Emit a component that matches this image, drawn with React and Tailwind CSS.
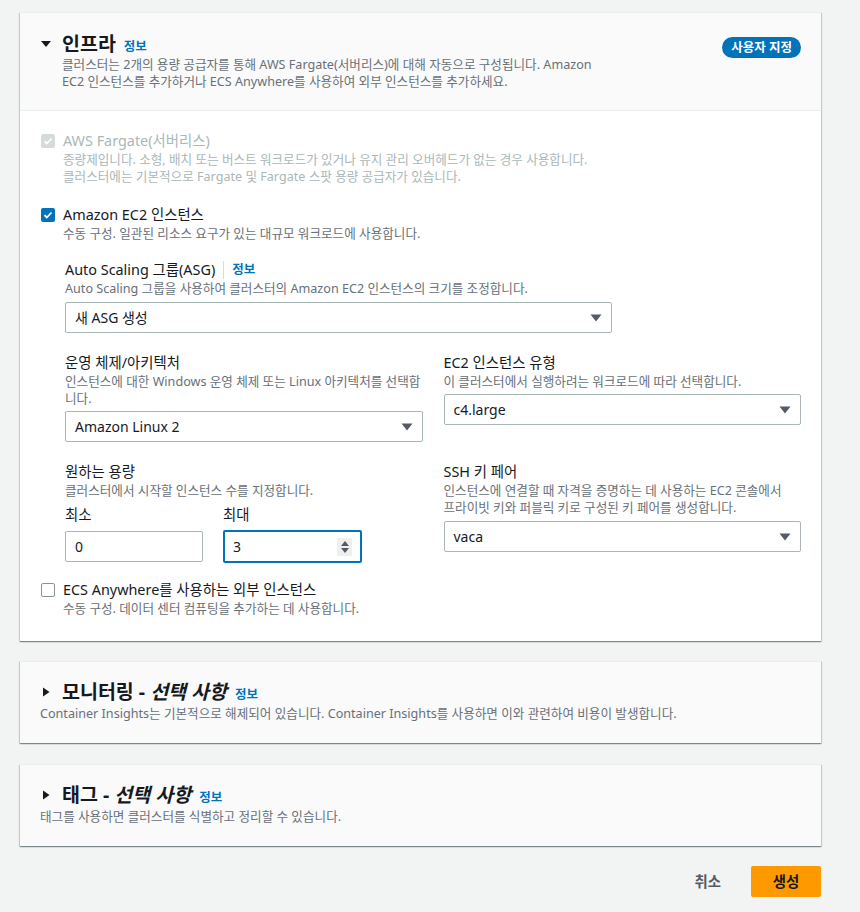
const FONT = { fontFamily: '"Noto Sans", "Noto Sans CJK KR", sans-serif' };

const Caret = ({ open }) => (
  <svg width="12" height="12" viewBox="0 0 12 12" className="shrink-0">
    {open ? <path d="M1 3h10L6 9z" fill="#16191f" /> : <path d="M3 1.5v9L9.5 6z" fill="#16191f" />}
  </svg>
);

const Info = ({ className = "" }) => (
  <span className={"text-[12.5px] font-bold text-[#0073bb] " + className}>정보</span>
);

const Line = ({ children, muted }) => (
  <div className={"h-[17px] whitespace-nowrap text-[12.6px] leading-[17px] " + (muted ? "text-[#aab7b8]" : "text-[#687078]")}>
    {children}
  </div>
);

const Checkbox = ({ state }) => {
  if (state === "off")
    return <span className="mt-[3px] block h-[14px] w-[14px] shrink-0 rounded-[2px] border border-[#879596] bg-white" />;
  const bg = state === "disabled" ? "bg-[#d5dbdb]" : "bg-[#0073bb]";
  return (
    <span className={"mt-[3px] flex h-[14px] w-[14px] shrink-0 items-center justify-center rounded-[2px] " + bg}>
      <svg width="10" height="10" viewBox="0 0 10 10">
        <path d="M1.5 5.2l2.3 2.3 4.7-5" stroke="white" strokeWidth="1.8" fill="none" />
      </svg>
    </span>
  );
};

const Select = ({ value, className = "" }) => (
  <div className={"flex h-[31px] items-center justify-between rounded-[2px] border border-[#aab7b8] bg-white pl-[9px] pr-[9px] " + className}>
    <span className="text-[14px] text-[#16191f]">{value}</span>
    <svg width="12" height="8" viewBox="0 0 12 8">
      <path d="M0.5 0.5h11L6 7.5z" fill="#545b64" />
    </svg>
  </div>
);

const Label = ({ children, muted }) => (
  <div className={"flex h-5 items-center whitespace-nowrap text-[14.4px] leading-5 " + (muted ? "text-[#aab7b8]" : "text-[#16191f]")}>
    {children}
  </div>
);

const Option = ({ state, label, lines, muted }) => (
  <div className="flex gap-2 pl-px">
    <Checkbox state={state} />
    <div>
      <Label muted={muted}>{label}</Label>
      {lines.map((l) => (
        <Line key={l} muted={muted}>{l}</Line>
      ))}
    </div>
  </div>
);

const Field = ({ label, desc, children }) => (
  <div>
    <Label>{label}</Label>
    {desc.map((d) => (
      <Line key={d}>{d}</Line>
    ))}
    {children}
  </div>
);

const cardShadow = "shadow-[0_1px_1px_0_rgba(0,28,36,0.3),1px_1px_1px_0_rgba(0,28,36,0.15),-1px_1px_1px_0_rgba(0,28,36,0.15)]";

const Title = ({ children }) => (
  <h2 className="flex h-[22px] items-baseline gap-2 whitespace-nowrap text-[19.5px] font-bold leading-[22px] text-[#16191f]">
    {children}
  </h2>
);

const CollapsedCard = ({ title, desc }) => (
  <section className={"border-t border-[#eaeded] bg-[#fafafa] px-5 pb-[21px] pt-[19px] " + cardShadow}>
    <div className="flex items-center gap-[10px]">
      <Caret />
      <Title>
        <span>
          {title} - <i>선택 사항</i>
        </span>
        <Info />
      </Title>
    </div>
    <div className="mt-[2px]">
      <Line>{desc}</Line>
    </div>
  </section>
);

export default function App() {
  return (
    <div style={FONT} className="h-[912px] w-[860px] overflow-hidden bg-[#f2f3f3] pt-3">
      <div className="ml-5 w-[801px]">
        {/* 인프라 */}
        <section className={"border-t border-[#eaeded] bg-white " + cardShadow}>
          <header className="flex items-start justify-between border-b border-[#eaeded] bg-[#fafafa] px-5 pb-5 pt-5">
            <div>
              <div className="flex items-center gap-[10px]">
                <Caret open />
                <Title>
                  <span>인프라</span>
                  <Info />
                </Title>
              </div>
              <div className="ml-[22px] mt-px">
                <Line>클러스터는 2개의 용량 공급자를 통해 AWS Fargate(서버리스)에 대해 자동으로 구성됩니다. Amazon</Line>
                <Line>EC2 인스턴스를 추가하거나 ECS Anywhere를 사용하여 외부 인스턴스를 추가하세요.</Line>
              </div>
            </div>
            <span className="mt-1 rounded-full bg-[#0073bb] px-[9px] text-[12.5px] font-bold leading-[21px] text-white">
              사용자 지정
            </span>
          </header>

          <div className="px-5 pb-6 pt-5">
            <Option
              state="disabled"
              muted
              label="AWS Fargate(서버리스)"
              lines={[
                "종량제입니다. 소형, 배치 또는 버스트 워크로드가 있거나 유지 관리 오버헤드가 없는 경우 사용합니다.",
                "클러스터에는 기본적으로 Fargate 및 Fargate 스팟 용량 공급자가 있습니다.",
              ]}
            />
            <div className="mt-5">
              <Option state="on" label="Amazon EC2 인스턴스" lines={["수동 구성. 일관된 리소스 요구가 있는 대규모 워크로드에 사용합니다."]} />
            </div>

            <div className="ml-[25px] mt-[18px]">
              <Label>
                Auto Scaling 그룹(ASG)
                <span className="mx-2 h-[18px] w-px bg-[#d5dbdb]" />
                <Info />
              </Label>
              <Line>Auto Scaling 그룹을 사용하여 클러스터의 Amazon EC2 인스턴스의 크기를 조정합니다.</Line>
              <Select value="새 ASG 생성" className="mt-[5px] w-[547px]" />

              <div className="mt-5 grid grid-cols-2 gap-x-[21px] gap-y-5">
                <Field
                  label="운영 체제/아키텍처"
                  desc={["인스턴스에 대한 Windows 운영 체제 또는 Linux 아키텍처를 선택합", "니다."]}
                >
                  <Select value="Amazon Linux 2" className="mt-1" />
                </Field>
                <Field label="EC2 인스턴스 유형" desc={["이 클러스터에서 실행하려는 워크로드에 따라 선택합니다."]}>
                  <Select value="c4.large" className="mt-1" />
                </Field>

                <Field label="원하는 용량" desc={["클러스터에서 시작할 인스턴스 수를 지정합니다."]}>
                  <div className="mt-1.5 flex gap-5">
                    <div>
                      <Label>최소</Label>
                      <div className="mt-1.5 flex h-[31px] w-[138px] items-center rounded-[2px] border border-[#aab7b8] bg-white px-[9px] text-[14px] text-[#16191f]">
                        0
                      </div>
                    </div>
                    <div>
                      <Label>최대</Label>
                      <div className="mt-[5px] flex h-[33px] w-[139px] items-center justify-between rounded-[2px] border-2 border-[#0073bb] bg-white pl-[8px] pr-[8px] text-[14px] text-[#16191f]">
                        3
                        <span className="flex h-[18px] w-[15px] flex-col items-center justify-center gap-[2px] bg-[#efefef]">
                          <svg width="8" height="5" viewBox="0 0 8 5"><path d="M4 0L8 5H0z" fill="#545b64" /></svg>
                          <svg width="8" height="5" viewBox="0 0 8 5"><path d="M0 0h8L4 5z" fill="#545b64" /></svg>
                        </span>
                      </div>
                    </div>
                  </div>
                </Field>
                <Field
                  label="SSH 키 페어"
                  desc={[
                    "인스턴스에 연결할 때 자격을 증명하는 데 사용하는 EC2 콘솔에서",
                    "프라이빗 키와 퍼블릭 키로 구성된 키 페어를 생성합니다.",
                  ]}
                >
                  <Select value="vaca" className="mt-[5px]" />
                </Field>
              </div>
            </div>

            <div className="mt-[17px]">
              <Option state="off" label="ECS Anywhere를 사용하는 외부 인스턴스" lines={["수동 구성. 데이터 센터 컴퓨팅을 추가하는 데 사용합니다."]} />
            </div>
          </div>
        </section>

        <div className="mt-5">
          <CollapsedCard
            title="모니터링"
            desc="Container Insights는 기본적으로 해제되어 있습니다. Container Insights를 사용하면 이와 관련하여 비용이 발생합니다."
          />
        </div>
        <div className="mt-[21px]">
          <CollapsedCard title="태그" desc="태그를 사용하면 클러스터를 식별하고 정리할 수 있습니다." />
        </div>

        <div className="mt-5 flex items-center justify-end gap-[30px]">
          <button className="text-[14.4px] font-bold text-[#545b64]">취소</button>
          <button className="h-[31px] w-[70px] rounded-[2px] bg-[#ff9900] text-[14.4px] font-bold text-[#16191f]">생성</button>
        </div>
      </div>
    </div>
  );
}
